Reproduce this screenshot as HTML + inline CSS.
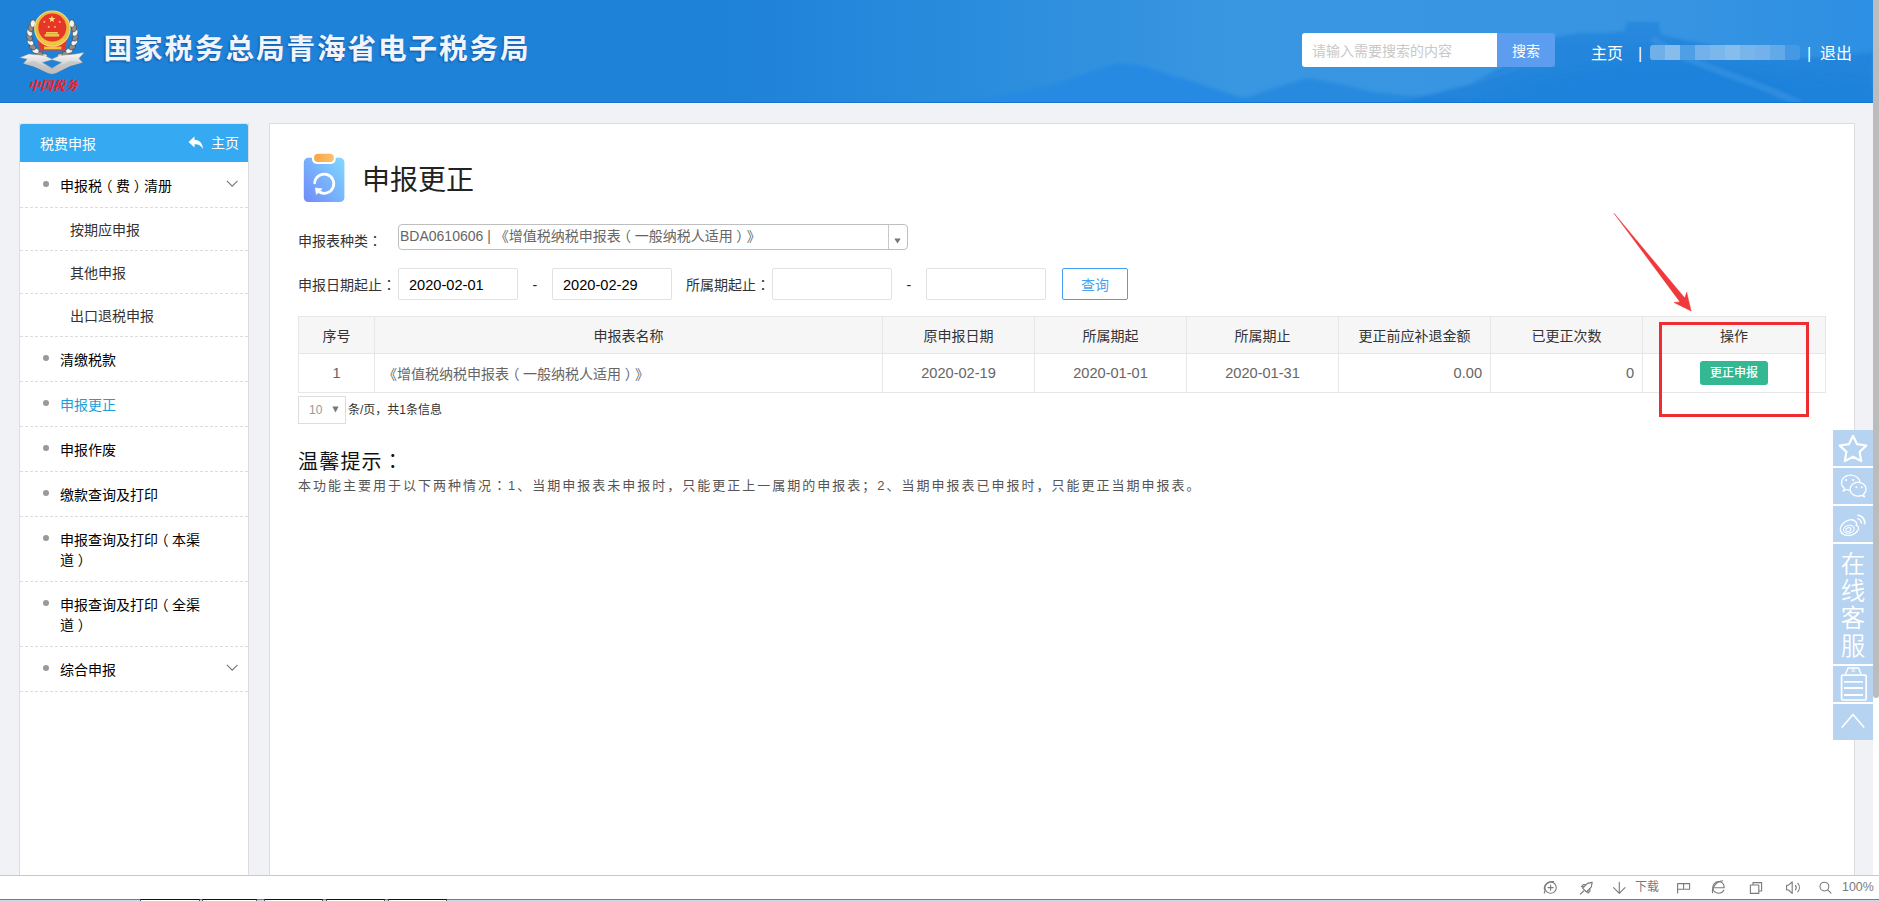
<!DOCTYPE html>
<html lang="zh-CN">
<head>
<meta charset="utf-8">
<title>国家税务总局青海省电子税务局</title>
<style>
*{box-sizing:border-box;margin:0;padding:0}
html,body{width:1879px;height:901px;overflow:hidden}
body{position:relative;background:#f0f2f5;font-family:"Liberation Sans","Noto Sans CJK SC",sans-serif;color:#333;font-size:14px;text-spacing-trim:space-all;font-kerning:none}
.abs{position:absolute}
.pl{position:relative;left:-.26em}.pr{position:relative;left:.26em}
.c{font-family:"Liberation Sans","Noto Sans CJK TC",sans-serif}
/* header */
#hd{position:absolute;left:0;top:0;width:1873px;height:104px;background:#1f82d9;overflow:hidden;border-bottom:1px solid #fbfaf8}
#hd .bg{position:absolute;left:0;top:0;width:1873px;height:103px}
#title{position:absolute;left:103.6px;top:26.5px;height:44px;line-height:44px;font-size:28.6px;font-weight:bold;color:#f1f5fb;letter-spacing:1.9px;white-space:nowrap;text-shadow:-1px 1px 2px rgba(0,30,90,.45)}
#sbox{position:absolute;left:1302px;top:33px;width:195px;height:34px;background:#fff;border-radius:3px 0 0 3px;color:#c8c8c8;font-size:14px;line-height:36px;padding-left:10px;white-space:nowrap}
#sbtn{position:absolute;left:1497px;top:33px;width:58px;height:34px;background:#5c9df0;border-radius:0 3px 3px 0;color:#fff;font-size:14px;line-height:36px;text-align:center}
.hl{position:absolute;top:41.5px;height:24px;line-height:24px;font-size:16px;color:#fff;white-space:nowrap}
/* sidebar */
#sd{position:absolute;left:19px;top:123px;width:230px;height:752px;background:#fff;border-left:1px solid #ddd;border-right:1px solid #ddd;border-top:1px solid #e4e2e2}
#sdh{position:absolute;left:0;top:0;width:228px;height:38px;background:#35aaf2;color:#fff;font-size:14px;line-height:40px;border-radius:2px 2px 0 0}
.mi{position:absolute;left:0;width:228px;border-bottom:1px dashed #dcdcdc;font-size:14px;color:#000}
.mi .t{position:absolute;left:40px;white-space:nowrap;line-height:20px}
.mi .d{position:absolute;left:23px;width:6px;height:6px;border-radius:3px;background:#999}
.mi.sub{color:#333}
.mi.sub .t{left:50px}
.chev{position:absolute;left:206.4px;width:12.4px;height:7.1px}
/* main */
#mn{position:absolute;left:269px;top:123px;width:1586px;height:760px;background:#fff;border:1px solid #ddd}
.lb{position:absolute;font-size:14px;color:#333;white-space:nowrap;line-height:20px}
.ip{position:absolute;height:32px;width:120px;border:1px solid #e2e2e2;border-radius:2px;background:#fff;font-size:14.6px;color:#000;line-height:32px;padding-left:10px}
table{position:absolute;left:298px;top:316px;border-collapse:collapse;table-layout:fixed;width:1527px;font-size:14px}
th,td{border:1px solid #e6e6e6;text-align:center;font-weight:normal;white-space:nowrap;overflow:hidden}
th{height:37px;background:#f6f6f6;color:#333}
td{height:39px;color:#666;font-size:14.6px}
/* float bar */
.fb{position:absolute;left:1833px;width:40px;background:#b6d3f1;color:#fff;overflow:hidden}
.fb svg{display:block}
/* status */
#st{position:absolute;left:0;top:875px;width:1879px;height:26px;background:#fff;border-top:1px solid #c9c9c9}
</style>
</head>
<body>
<div id="hd">
<svg class="bg" viewBox="0 0 1873 103" preserveAspectRatio="none">
<defs>
<linearGradient id="hg" x1="0" x2="1" y1="0" y2="0"><stop offset="0" stop-color="#1f82d9"/><stop offset=".39" stop-color="#1f82d9"/><stop offset=".5" stop-color="#288bdc"/><stop offset=".66" stop-color="#3996e1"/><stop offset=".9" stop-color="#3694e2"/><stop offset="1" stop-color="#2d8fe3"/></linearGradient>
<linearGradient id="mg" x1="0" x2="0" y1="0" y2="1"><stop offset="0" stop-color="#2888de"/><stop offset=".4" stop-color="#2284db"/><stop offset="1" stop-color="#1f82db"/></linearGradient>
<filter id="bl" x="-5%" y="-20%" width="110%" height="140%"><feGaussianBlur stdDeviation="1.6"/></filter>
<filter id="bl2" x="-5%" y="-20%" width="110%" height="140%"><feGaussianBlur stdDeviation="5"/></filter>
</defs>
<rect width="1873" height="103" fill="url(#hg)"/>
<path d="M927 104 L990 97 L1030 90 L1062 82 L1090 72 L1118 63 L1140 65 L1165 73 L1200 84 L1240 97 L1275 104 Z" fill="#258ae3" filter="url(#bl)" opacity=".95"/>
<path d="M1230 104 L1262 92 L1290 83 L1308 78 L1335 83 L1375 92 L1420 97 L1460 104 Z" fill="#2889de" filter="url(#bl)" opacity=".85"/>
<path d="M1380 104 L1430 94 L1470 84 L1505 66 L1530 50 L1550 38 L1580 33 L1610 33 L1625 31 L1627 22 L1658 22 L1661 35 L1700 43 L1750 52 L1800 58 L1840 56 L1873 52 L1873 104 Z" fill="url(#mg)" filter="url(#bl)" opacity=".92"/>
<path d="M1480 104 L1540 82 L1640 60 L1720 66 L1800 78 L1873 84 L1873 104 Z" fill="#1f82db" filter="url(#bl2)" opacity=".9"/>
<path d="M1652 38 C1668 52 1700 64 1738 78 S1790 98 1800 104" fill="none" stroke="#3f97e4" stroke-width="7" opacity=".5" filter="url(#bl)"/>
<path d="M1380 104 C1420 96 1470 88 1530 62" fill="none" stroke="#3f97e4" stroke-width="3" opacity=".3" filter="url(#bl)"/>
<rect y="102" width="1873" height="1" fill="#0f76d6"/>
</svg>
<svg class="abs" style="left:15px;top:5px" width="80" height="95" viewBox="15 5 80 95">
<defs><linearGradient id="sv" x1="0" y1="0" x2="0" y2="1"><stop offset="0" stop-color="#fafafa"/><stop offset=".55" stop-color="#d2d2d2"/><stop offset="1" stop-color="#9c9c9c"/></linearGradient>
<filter id="lb"><feGaussianBlur stdDeviation=".35"/></filter></defs>
<g filter="url(#lb)">
<ellipse cx="43.8" cy="56.4" rx="3.7" ry="2.6" transform="rotate(174 43.8 56.4)" fill="#f4f4f4" stroke="#3c3c3c" stroke-width=".55"/><ellipse cx="39.4" cy="54.0" rx="3.7" ry="2.6" transform="rotate(186 39.4 54.0)" fill="#8e8e8e" stroke="#3c3c3c" stroke-width=".55"/><ellipse cx="35.6" cy="50.8" rx="3.7" ry="2.6" transform="rotate(199 35.6 50.8)" fill="#f4f4f4" stroke="#3c3c3c" stroke-width=".55"/><ellipse cx="32.6" cy="46.9" rx="3.7" ry="2.6" transform="rotate(212 32.6 46.9)" fill="#8e8e8e" stroke="#3c3c3c" stroke-width=".55"/><ellipse cx="30.5" cy="42.5" rx="3.7" ry="2.6" transform="rotate(224 30.5 42.5)" fill="#f4f4f4" stroke="#3c3c3c" stroke-width=".55"/><ellipse cx="29.5" cy="37.7" rx="3.7" ry="2.6" transform="rotate(236 29.5 37.7)" fill="#8e8e8e" stroke="#3c3c3c" stroke-width=".55"/><ellipse cx="29.6" cy="32.8" rx="3.7" ry="2.6" transform="rotate(249 29.6 32.8)" fill="#f4f4f4" stroke="#3c3c3c" stroke-width=".55"/><ellipse cx="30.7" cy="28.0" rx="3.7" ry="2.6" transform="rotate(262 30.7 28.0)" fill="#8e8e8e" stroke="#3c3c3c" stroke-width=".55"/><ellipse cx="32.9" cy="23.6" rx="3.7" ry="2.6" transform="rotate(274 32.9 23.6)" fill="#f4f4f4" stroke="#3c3c3c" stroke-width=".55"/><ellipse cx="61.0" cy="56.4" rx="3.7" ry="2.6" transform="rotate(6 61.0 56.4)" fill="#f4f4f4" stroke="#3c3c3c" stroke-width=".55"/><ellipse cx="65.4" cy="54.0" rx="3.7" ry="2.6" transform="rotate(-6 65.4 54.0)" fill="#8e8e8e" stroke="#3c3c3c" stroke-width=".55"/><ellipse cx="69.2" cy="50.8" rx="3.7" ry="2.6" transform="rotate(-19 69.2 50.8)" fill="#f4f4f4" stroke="#3c3c3c" stroke-width=".55"/><ellipse cx="72.2" cy="46.9" rx="3.7" ry="2.6" transform="rotate(-32 72.2 46.9)" fill="#8e8e8e" stroke="#3c3c3c" stroke-width=".55"/><ellipse cx="74.3" cy="42.5" rx="3.7" ry="2.6" transform="rotate(-44 74.3 42.5)" fill="#f4f4f4" stroke="#3c3c3c" stroke-width=".55"/><ellipse cx="75.3" cy="37.7" rx="3.7" ry="2.6" transform="rotate(-56 75.3 37.7)" fill="#8e8e8e" stroke="#3c3c3c" stroke-width=".55"/><ellipse cx="75.2" cy="32.8" rx="3.7" ry="2.6" transform="rotate(-69 75.2 32.8)" fill="#f4f4f4" stroke="#3c3c3c" stroke-width=".55"/><ellipse cx="74.1" cy="28.0" rx="3.7" ry="2.6" transform="rotate(-82 74.1 28.0)" fill="#8e8e8e" stroke="#3c3c3c" stroke-width=".55"/><ellipse cx="71.9" cy="23.6" rx="3.7" ry="2.6" transform="rotate(-94 71.9 23.6)" fill="#f4f4f4" stroke="#3c3c3c" stroke-width=".55"/>
<path d="M19.8 57.6 L29 54 L44 55.4 L52 59 L60 55.4 L75.5 54 L84 52.6 L79 58.4 L82.6 62.6 L70 66 L56 73 L52 74 L48 73 L34 66.4 L23.4 63.4 L27 59.2 Z M42.5 62.6 L52 68 L61.5 62.6 L52 59.8 Z" fill="url(#sv)" fill-rule="evenodd" stroke="#8a8a8a" stroke-width=".4"/>
<path d="M23.4 63.4 L34 61 L52 69.4 L70 61 L82.6 62.6 L70 66 L56 73 L52 74 L48 73 L34 66.4 Z" fill="#c4c4c4" opacity=".8"/>
<path d="M38 40 H66.8 L65.6 50.4 H39.2 Z" fill="#e8372a"/>
<rect x="44" y="46.6" width="17.4" height="2.7" fill="#f2c53a"/>
<circle cx="52.4" cy="28.6" r="17.6" fill="#e9b93a"/>
<circle cx="52.4" cy="28.6" r="17.6" fill="none" stroke="#f6dc7a" stroke-width="1.2"/>
<circle cx="52.3" cy="27.6" r="14" fill="#e8352a"/>
<path d="M40 37 Q52.4 47.4 64.8 37 L63.4 41.4 Q52.4 48.6 41.4 41.4 Z" fill="#f0c63c"/>
<rect x="46" y="32" width="11.8" height="1.7" fill="#f1cf5a"/><rect x="44.6" y="34" width="14.6" height="2.6" fill="#eec24a"/>
<polygon points="51.90,15.50 52.77,18.00 55.42,18.06 53.31,19.66 54.07,22.19 51.90,20.68 49.73,22.19 50.49,19.66 48.38,18.06 51.03,18.00" fill="#ffe27a"/><polygon points="44.30,20.40 44.65,21.41 45.73,21.44 44.87,22.09 45.18,23.11 44.30,22.50 43.42,23.11 43.73,22.09 42.87,21.44 43.95,21.41" fill="#ffe27a"/><polygon points="59.80,20.40 60.15,21.41 61.23,21.44 60.37,22.09 60.68,23.11 59.80,22.50 58.92,23.11 59.23,22.09 58.37,21.44 59.45,21.41" fill="#ffe27a"/><polygon points="48.70,25.40 49.05,26.41 50.13,26.44 49.27,27.09 49.58,28.11 48.70,27.50 47.82,28.11 48.13,27.09 47.27,26.44 48.35,26.41" fill="#ffe27a"/><polygon points="55.00,25.40 55.35,26.41 56.43,26.44 55.57,27.09 55.88,28.11 55.00,27.50 54.12,28.11 54.43,27.09 53.57,26.44 54.65,26.41" fill="#ffe27a"/>
</g>
<text x="0" y="0" text-anchor="middle" font-family="'Liberation Serif','Noto Serif CJK SC',serif" font-size="12.4" font-weight="900" font-style="italic" fill="#ee1c1c" transform="translate(52.6 89.6) skewX(-3)">中国税务</text>
</svg>
<div id="title">国家税务总局青海省电子税务局</div>
<div id="sbox">请输入需要搜索的内容</div>
<div id="sbtn">搜索</div>
<div class="hl" style="left:1591px">主页</div>
<div class="hl" style="left:1638px">|</div>
<div class="abs" style="left:1650px;top:45px;width:150px;height:15px;border-radius:3px;overflow:hidden;font-size:0;white-space:nowrap"><i style="display:inline-block;width:15px;height:15px;background:#6fb0e9"></i><i style="display:inline-block;width:15px;height:15px;background:#86bdec"></i><i style="display:inline-block;width:15px;height:15px;background:#4f9fe5"></i><i style="display:inline-block;width:15px;height:15px;background:#72b1e9"></i><i style="display:inline-block;width:15px;height:15px;background:#7cb7eb"></i><i style="display:inline-block;width:15px;height:15px;background:#86bdec"></i><i style="display:inline-block;width:15px;height:15px;background:#7ab5ea"></i><i style="display:inline-block;width:15px;height:15px;background:#72b1e9"></i><i style="display:inline-block;width:15px;height:15px;background:#62a9e7"></i><i style="display:inline-block;width:15px;height:15px;background:#4599e3"></i></div>
<div class="hl" style="left:1807px">|</div>
<div class="hl" style="left:1820px">退出</div>
</div>

<div id="sd">
<div id="sdh"><span class="abs" style="left:20px">税费申报</span><span class="abs" style="left:191px;top:-1px;font-size:14px">主页</span><svg class="abs" style="left:168px;top:12px" width="16" height="14" viewBox="0 0 16 14"><path d="M6.5 0.5 L0.5 6 L6.5 11.5 V8.2 C10.5 8 13.2 9.4 15 13 C14.8 7.5 11.5 4 6.5 3.8 Z" fill="#fff"/></svg></div>
<div class="mi" style="top:39px;height:45px;color:#000"><span class="d" style="top:18px"></span><span class="t" style="top:13px">申报税<span class="pl">（</span>费<span class="pr">）</span>清册</span><svg class="chev" style="top:17.2px" viewBox="0 0 14 8"><path d="M1 1 L7 7 L13 1" fill="none" stroke="#7c7c7c" stroke-width="1.35"/></svg></div>
<div class="mi sub" style="top:84px;height:43px"><span class="t" style="top:12px">按期应申报</span></div>
<div class="mi sub" style="top:127px;height:43px"><span class="t" style="top:12px">其他申报</span></div>
<div class="mi sub" style="top:170px;height:43px"><span class="t" style="top:12px">出口退税申报</span></div>
<div class="mi" style="top:213px;height:45px;color:#000"><span class="d" style="top:18px"></span><span class="t" style="top:13px">清缴税款</span></div>
<div class="mi" style="top:258px;height:45px;color:#1b9fd6"><span class="d" style="top:18px"></span><span class="t" style="top:13px">申报更正</span></div>
<div class="mi" style="top:303px;height:45px;color:#000"><span class="d" style="top:18px"></span><span class="t" style="top:13px">申报作废</span></div>
<div class="mi" style="top:348px;height:45px;color:#000"><span class="d" style="top:18px"></span><span class="t" style="top:13px">缴款查询及打印</span></div>
<div class="mi" style="top:393px;height:65px;color:#000"><span class="d" style="top:18px"></span><span class="t" style="top:13px">申报查询及打印<span class="pl">（</span>本渠<br>道<span class="pr">）</span></span></div>
<div class="mi" style="top:458px;height:65px;color:#000"><span class="d" style="top:18px"></span><span class="t" style="top:13px">申报查询及打印<span class="pl">（</span>全渠<br>道<span class="pr">）</span></span></div>
<div class="mi" style="top:523px;height:45px;color:#000"><span class="d" style="top:18px"></span><span class="t" style="top:13px">综合申报</span><svg class="chev" style="top:17.2px" viewBox="0 0 14 8"><path d="M1 1 L7 7 L13 1" fill="none" stroke="#7c7c7c" stroke-width="1.35"/></svg></div>
</div>

<div id="mn"></div>

<!-- page title -->
<svg class="abs" style="left:302px;top:152px" width="44" height="52" viewBox="0 0 44 52">
<defs><linearGradient id="ig" x1="1" y1="0.1" x2="0" y2="0.95"><stop offset="0" stop-color="#7fd6ff"/><stop offset="1" stop-color="#708cf9"/></linearGradient>
<linearGradient id="og" x1="0" x2="1" y1="0" y2="0"><stop offset="0" stop-color="#fba644"/><stop offset="1" stop-color="#fcc06e"/></linearGradient></defs>
<rect x="1.8" y="5.8" width="40.6" height="44.2" rx="4.6" fill="url(#ig)"/>
<rect x="10" y="-2" width="23.7" height="13.9" rx="4.6" fill="#fff"/>
<rect x="12.1" y="1.8" width="19.8" height="8.2" rx="4.1" fill="url(#og)"/>
<path d="M12.65 30.8 A9.6 9.6 0 1 1 17.4 40" fill="none" stroke="#fff" stroke-width="2.7" stroke-linecap="round"/>
<path d="M13.3 36 L20.2 36.8 L14.4 42.6 Z" fill="#fff" stroke="#fff" stroke-width=".6" stroke-linejoin="round"/>
</svg>
<div class="abs" style="left:362px;top:159.5px;font-size:28px;line-height:42px;color:#222;white-space:nowrap">申报更正</div>

<!-- form -->
<div class="lb" style="left:298px;top:231px">申报表种类<span class="c" lang="zh-TW">：</span></div>
<div class="abs" style="left:398px;top:224px;width:510px;height:26px;border:1px solid #bfbfbf;border-radius:4px;background:#fff">
<span class="abs" style="left:1px;top:0;font-size:14px;color:#666;line-height:22px;white-space:nowrap">BDA0610606 | 《增值税纳税申报表<span class="pl">（</span>一般纳税人适用<span class="pr">）</span>》</span>
<span class="abs" style="left:489px;top:0;width:1px;height:24px;background:#c9c9c9"></span>
<svg class="abs" style="left:495px;top:13px" width="7" height="6" viewBox="0 0 7 6"><path d="M0.3 0.5 H6.7 L3.5 5.6 Z" fill="#777"/></svg>
</div>
<div class="lb" style="left:298px;top:275px">申报日期起止<span class="c" lang="zh-TW">：</span></div>
<div class="ip" style="left:398px;top:268px">2020-02-01</div>
<div class="lb" style="left:532.5px;top:275px;color:#222">-</div>
<div class="ip" style="left:552px;top:268px">2020-02-29</div>
<div class="lb" style="left:686px;top:275px">所属期起止<span class="c" lang="zh-TW">：</span></div>
<div class="ip" style="left:772px;top:268px"></div>
<div class="lb" style="left:906.5px;top:275px;color:#222">-</div>
<div class="ip" style="left:926px;top:268px"></div>
<div class="abs" style="left:1062px;top:268px;width:66px;height:32px;border:1px solid #459ff2;border-radius:2px;color:#4a9ff0;font-size:14px;line-height:32px;text-align:center;background:#fff">查询</div>

<!-- table -->
<table>
<colgroup><col style="width:76px"><col style="width:508px"><col style="width:152px"><col style="width:152px"><col style="width:152px"><col style="width:152px"><col style="width:152px"><col style="width:183px"></colgroup>
<tr><th>序号</th><th>申报表名称</th><th>原申报日期</th><th>所属期起</th><th>所属期止</th><th>更正前应补退金额</th><th>已更正次数</th><th>操作</th></tr>
<tr><td>1</td><td style="text-align:left;padding-left:8px;font-size:14px">《增值税纳税申报表<span class="pl">（</span>一般纳税人适用<span class="pr">）</span>》</td><td>2020-02-19</td><td>2020-01-01</td><td>2020-01-31</td><td style="text-align:right;padding-right:8px">0.00</td><td style="text-align:right;padding-right:8px">0</td><td><span style="display:inline-block;width:68px;height:24px;line-height:24px;background:#33b893;color:#fff;font-size:12px;font-weight:500;border-radius:3px;vertical-align:middle;position:relative;top:-0.5px">更正申报</span></td></tr>
</table>

<!-- pager -->
<div class="abs" style="left:298px;top:396px;width:48px;height:28px;border:1px solid #ddd;background:#fff;font-size:12px;color:#999;line-height:27px;padding-left:10px">10</div>
<svg class="abs" style="left:332px;top:406px" width="7" height="7" viewBox="0 0 7 7"><path d="M0.4 0.5 H6.6 L3.5 6.5 Z" fill="#777"/></svg>
<div class="abs" style="left:348px;top:401px;font-size:12px;color:#333;line-height:18px;white-space:nowrap">条/页，共1条信息</div>

<!-- tips -->
<div class="abs" style="left:298px;top:447px;font-size:20px;color:#111;line-height:28px;white-space:nowrap;letter-spacing:1.2px;margin-top:.8px">温馨提示<span class="c" lang="zh-TW">：</span></div>
<div class="abs" style="left:298px;top:476px;font-size:13px;color:#555;line-height:20px;white-space:nowrap;letter-spacing:2px">本功能主要用于以下两种情况<span class="c" lang="zh-TW">：</span>1、当期申报表未申报时，只能更正上一属期的申报表；2、当期申报表已申报时，只能更正当期申报表。</div>

<!-- red annotation -->
<svg class="abs" style="left:1600px;top:200px" width="230" height="230" viewBox="0 0 230 230">
<rect x="60.5" y="123.5" width="147" height="92" fill="none" stroke="#ee2d32" stroke-width="3"/>
<path d="M14 13.3 L84.8 98.1 L86.7 92.2 L91.1 111 L73.9 102.4 L80 101.9 Z" fill="#f1383a" stroke="#f1383a" stroke-width=".5" stroke-linejoin="round"/>
</svg>

<!-- float bar -->
<div class="abs" style="left:1833px;top:430px;width:40px;height:310px;background:#fff"></div>
<div class="fb" style="top:430px;height:36px"><svg width="40" height="36" viewBox="0 0 40 36"><path d="M20.0 5.8 L24.1 14.2 L33.3 15.5 L26.6 21.9 L28.2 31.1 L20.0 26.7 L11.8 31.1 L13.4 21.9 L6.7 15.5 L15.9 14.2 Z" fill="none" stroke="#fff" stroke-width="2.2" stroke-linejoin="round"/></svg></div>
<div class="fb" style="top:468px;height:36px"><svg width="40" height="36" viewBox="0 0 40 36"><path d="M11.5 20.3 L10 23.2 L13.6 21.5 A9.2 7.6 0 1 0 11.5 20.3 Z" fill="none" stroke="#fff" stroke-width="1.3" stroke-linejoin="round"/><path d="M30.3 26.4 L31.6 28.8 L28.6 27.4 A7.9 6.9 0 1 1 30.3 26.4 Z" fill="#b6d3f1" stroke="#fff" stroke-width="1.3" stroke-linejoin="round"/><circle cx="13.1" cy="12.1" r="1.1" fill="#fff"/><circle cx="20.1" cy="12.1" r="1.1" fill="#fff"/><circle cx="23.4" cy="19.2" r="1" fill="#fff"/><circle cx="28.8" cy="19.2" r="1" fill="#fff"/></svg></div>
<div class="fb" style="top:506px;height:36px"><svg width="40" height="36" viewBox="0 0 40 36"><g fill="none" stroke="#fff"><path d="M22.5 15.6 C20 12.5 14 13.5 10 17.5 C6 21.5 6.5 26.5 11 28.6 C16 30.8 23 28.6 25.2 23.8 C26.4 21 24.6 19.6 23.2 19.4 C24 17.8 23.6 16.6 22.5 15.6 Z" stroke-width="1.3"/><ellipse cx="15.8" cy="23.3" rx="5.4" ry="3.9" stroke-width="1.1" transform="rotate(-12 15.8 23.3)"/><ellipse cx="15.4" cy="23.6" rx="2.6" ry="1.9" stroke-width="1" transform="rotate(-12 15.4 23.6)"/><path d="M24.3 9.2 A7.6 7.6 0 0 1 31.6 18.4" stroke-width="1.6"/><path d="M24 12.6 A4.3 4.3 0 0 1 28.2 17.6" stroke-width="1.4"/></g></svg></div>
<div class="fb" style="top:544px;height:120px;font-size:24.5px;line-height:27.2px;text-align:center;padding-top:7px;font-weight:350">在<br>线<br>客<br>服</div>
<div class="fb" style="top:666px;height:36px"><svg width="40" height="36" viewBox="0 0 40 36"><rect x="8.6" y="9.1" width="24.6" height="24.9" rx="1.2" fill="none" stroke="#fff" stroke-width="1.7"/><path d="M12.4 8.6 L15 2 H25.6 L28.2 8.6" fill="none" stroke="#fff" stroke-width="1.4" stroke-linejoin="round"/><circle cx="20.3" cy="4.6" r="1.3" fill="none" stroke="#fff" stroke-width=".9"/><path d="M11 15.9 H30 M11 22 H30 M11 29 H30" stroke="#fff" stroke-width="1.8"/></svg></div>
<div class="fb" style="top:704px;height:36px"><svg width="40" height="36" viewBox="0 0 40 36"><path d="M8.8 23.6 L20 10.4 L31.2 23.6" fill="none" stroke="#fff" stroke-width="1.6"/></svg></div>

<!-- scrollbar -->
<div class="abs" style="left:1873px;top:0;width:6px;height:875px;background:#fff"></div>
<div class="abs" style="left:1873px;top:0;width:6px;height:698px;background:#bcbcbc;border-radius:0 0 3px 3px"></div>

<div id="st">
<svg class="abs" style="left:1530px;top:-1px" width="349" height="26" viewBox="1530 874 349 26" fill="none" stroke="#7a7a7a" stroke-width="1.1" stroke-linecap="round" stroke-linejoin="round">
<circle cx="1550.6" cy="886.6" r="5.7"/><path d="M1548 886.6 H1553.2 M1550.6 884 V889.2" /><path d="M1544.4 888.5 C1543.6 884.5 1547.5 880.4 1553.6 880.6"/><path d="M1545 889.5 L1544.3 892"/>
<path d="M1592.2 881.4 L1587.4 882.4 L1582.6 887.2 L1586.4 891 L1591.2 886.2 Z"/><path d="M1584 885.8 L1581.4 885.6 L1583.4 883.6 L1586 883.8 M1587.8 889.6 L1588 892.2 L1590 890.2 L1589.8 887.6 M1583.6 890 L1580.4 893.2"/>
<path d="M1619.3 881.4 V892.2 M1613.6 886.6 L1619.3 892.3 L1625 886.6"/>
<path d="M1677.6 892 V882.6 H1689.6 V888.2 H1677.6 M1683.6 882.6 V888.2"/>
<path d="M1713.4 886.8 H1724.2 C1724.4 882.6 1721.6 880.6 1718.6 880.6 C1715.4 880.6 1712.8 883.2 1712.8 886.4 C1712.8 889.8 1715.4 892.2 1718.6 892.2 C1720.8 892.2 1722.8 891 1723.8 889.2"/><path d="M1712.6 891.8 C1711.4 887 1716 880.6 1722.6 879.8"/>
<path d="M1750.4 884 H1758.8 V892.4 H1750.4 Z M1753 884 V881.6 H1761.6 V890 H1758.8"/>
<path d="M1786.6 884.2 H1788.6 L1792.2 880.8 V892.4 L1788.6 889 H1786.6 Z M1795.4 884.4 C1796.4 885.6 1796.4 887.6 1795.4 888.8 M1797.8 882.4 C1800 884.8 1800 888.4 1797.8 890.8"/>
<circle cx="1824.4" cy="885.6" r="4.4"/><path d="M1827.6 888.8 L1831 892.2"/>
</svg>
<span class="abs" style="left:1635px;top:3px;font-size:12px;line-height:16px;color:#7a7a7a;white-space:nowrap">下载</span>
<span class="abs" style="left:1842px;top:3px;font-size:12.4px;line-height:16px;color:#7a7a7a;white-space:nowrap">100%</span>
<div class="abs" style="left:0;top:23px;width:1879px;height:1px;background:#6e7f94"></div>
<div class="abs" style="left:0;top:24px;width:1879px;height:1px;background:#c9d9ec"></div>
<div class="abs" style="left:140px;top:23px;width:60px;height:2px;background:#fff;border-top:1px solid #111;border-left:1px solid #555;border-right:1px solid #555"></div><div class="abs" style="left:202px;top:23px;width:55px;height:2px;background:#fff;border-top:1px solid #111;border-left:1px solid #555;border-right:1px solid #555"></div><div class="abs" style="left:264px;top:23px;width:59px;height:2px;background:#fff;border-top:1px solid #111;border-left:1px solid #555;border-right:1px solid #555"></div><div class="abs" style="left:326px;top:23px;width:59px;height:2px;background:#fff;border-top:1px solid #111;border-left:1px solid #555;border-right:1px solid #555"></div><div class="abs" style="left:388px;top:23px;width:59px;height:2px;background:#fff;border-top:1px solid #111;border-left:1px solid #555;border-right:1px solid #555"></div>
</div>
</body>
</html>
